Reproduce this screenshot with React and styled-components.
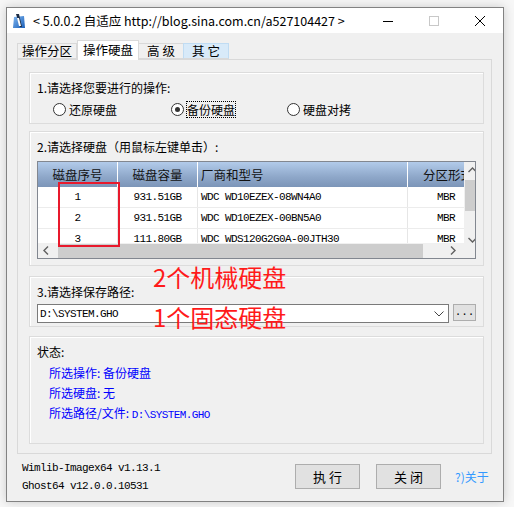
import React from 'react';
import styled, { createGlobalStyle } from 'styled-components';

const GlobalStyle = createGlobalStyle`
  body {
    margin: 0;
    background: #f7f7f7;
    font-family: "Noto Sans CJK SC", "Liberation Sans", sans-serif;
    font-size: 12px;
    color: #000;
  }
`;

const CJK = '"Noto Sans CJK SC", "Liberation Sans", sans-serif';
const MONO = '"Liberation Mono", "Noto Sans CJK SC", monospace';

const rows = [
  { no: 1, size: '931.51GB', model: 'WDC WD10EZEX-08WN4A0', part: 'MBR' },
  { no: 2, size: '931.51GB', model: 'WDC WD10EZEX-00BN5A0', part: 'MBR' },
  { no: 3, size: '111.80GB', model: 'WDC WDS120G2G0A-00JTH30', part: 'MBR' },
];

const columns = [
  { title: '磁盘序号', width: 80, align: 'center', head: 'center', key: 'no' },
  { title: '磁盘容量', width: 80, align: 'center', head: 'center', key: 'size' },
  { title: '厂商和型号', width: 210, align: 'left', head: 'left', key: 'model' },
  { title: '分区形式', width: 72, align: 'right', head: 'offset', key: 'part' },
];

const App = () => (
  <Page>
    <GlobalStyle />
    <Window>
      <TitleBar>
        <AppIcon viewBox="0 0 14 16">
          <defs>
            <linearGradient id="ic" x1="0" y1="0" x2="1" y2="1">
              <stop offset="0" stopColor="#7fb6f0" />
              <stop offset="1" stopColor="#1b5fb8" />
            </linearGradient>
          </defs>
          <path d="M2 4 L12 3 L13 15 L1 15 Z" fill="url(#ic)" />
          <path d="M4 1 L7 1 L10 14 L8 14 Z" fill="#1c2c44" />
          <path d="M5 5 L7 5 L9 13 L7 13 Z" fill="#fff" />
        </AppIcon>
        <TitleText>&lt; 5.0.0.2 自适应 http://blog.sina.com.cn/a527104427 &gt;</TitleText>
        <Controls>
          <CtrlButton>
            <svg width="10" height="10" viewBox="0 0 10 10"><path d="M0 5.5 H10" stroke="#000" strokeWidth="1" /></svg>
          </CtrlButton>
          <CtrlButton>
            <svg width="10" height="10" viewBox="0 0 10 10"><rect x="0.5" y="0.5" width="9" height="9" fill="none" stroke="#c8c8c8" strokeWidth="1" /></svg>
          </CtrlButton>
          <CtrlButton>
            <svg width="10" height="10" viewBox="0 0 10 10"><path d="M0 0 L10 10 M10 0 L0 10" stroke="#000" strokeWidth="1" /></svg>
          </CtrlButton>
        </Controls>
      </TitleBar>

      <Body>
        <TabRow>
          <Tab $w={60}>操作分区</Tab>
          <Tab $w={62} $active>操作硬盘</Tab>
          <Tab $w={46}>高 级</Tab>
          <Tab $w={46} $hover>其 它</Tab>
        </TabRow>

        <Panel>
          <Group $h={52}>
            <Label>1.请选择您要进行的操作:</Label>
            <RadioRow>
              <Radio $w={118}><RadioDot />还原硬盘</Radio>
              <Radio $w={116}><RadioDot $checked /><Focus>备份硬盘</Focus></Radio>
              <Radio><RadioDot />硬盘对拷</Radio>
            </RadioRow>
          </Group>

          <Group $h={135} $mt={7}>
            <Label>2.请选择硬盘（用鼠标左键单击）:</Label>
            <ListView>
              <ListArea>
                <HeaderRow>
                  {columns.map(c => (
                    <HeadCell key={c.key} $w={c.width} $align={c.head}>{c.title}</HeadCell>
                  ))}
                </HeaderRow>
                {rows.map(r => (
                  <DataRow key={r.no}>
                    {columns.map(c => (
                      <DataCell key={c.key} $w={c.width} $align={c.align}>{r[c.key]}</DataCell>
                    ))}
                  </DataRow>
                ))}
              </ListArea>
              <VScroll>
                <Arrow viewBox="0 0 9 6"><path d="M0.5 5 L4.5 1 L8.5 5" /></Arrow>
                <VThumb />
                <VSpacer />
                <Arrow viewBox="0 0 9 6"><path d="M0.5 1 L4.5 5 L8.5 1" /></Arrow>
              </VScroll>
              <HScroll>
                <Arrow viewBox="0 0 6 9"><path d="M5 0.5 L1 4.5 L5 8.5" /></Arrow>
                <HThumb />
                <Arrow viewBox="0 0 6 9"><path d="M1 0.5 L5 4.5 L1 8.5" /></Arrow>
              </HScroll>
              <Corner />
            </ListView>
          </Group>

          <Group $h={51} $mt={10}>
            <Label>3.请选择保存路径:</Label>
            <PathRow>
              <Combo>
                <Mono>D:\SYSTEM.GHO</Mono>
                <svg width="10" height="6" viewBox="0 0 10 6"><path d="M0.5 0.5 L5 5 L9.5 0.5" fill="none" stroke="#444" strokeWidth="1" /></svg>
              </Combo>
              <SmallButton>...</SmallButton>
            </PathRow>
          </Group>

          <Group $h={108} $mt={9}>
            <Label>状态:</Label>
            <StatusList>
              <StatusLine>所选操作: 备份硬盘</StatusLine>
              <StatusLine>所选硬盘: 无</StatusLine>
              <StatusLine>所选路径/文件: <Mono>D:\SYSTEM.GHO</Mono></StatusLine>
            </StatusList>
          </Group>

          <Highlight />
          <Note $top={203}>2个机械硬盘</Note>
          <Note $top={243}>1个固态硬盘</Note>
        </Panel>

        <Footer>
          <Versions>
            <Mono>Wimlib-Imagex64 v1.13.1</Mono>
            <Mono>Ghost64 v12.0.0.10531</Mono>
          </Versions>
          <Button>执 行</Button>
          <Button>关 闭</Button>
          <About>?)关于</About>
        </Footer>
      </Body>
    </Window>
  </Page>
);

const Page = styled.div`
  padding: 7px 10px 5px 6px;
`;

const Window = styled.div`
  box-sizing: border-box;
  width: 498px;
  height: 495px;
  border: 1px solid #828282;
  box-shadow: 0 0 10px rgba(0, 0, 0, 0.18);
  display: flex;
  flex-direction: column;
  background: #f0f0f0;
`;

const TitleBar = styled.div`
  height: 25px;
  background: #fff;
  display: flex;
  align-items: center;
`;

const AppIcon = styled.svg`
  width: 14px;
  height: 16px;
  margin-left: 5px;
  flex: none;
`;

const TitleText = styled.div`
  margin-left: 7px;
  font-family: ${CJK};
  font-size: 12.5px;
  white-space: nowrap;
  flex: 1;
`;

const Controls = styled.div`
  display: flex;
  height: 100%;
`;

const CtrlButton = styled.div`
  width: 46px;
  height: 100%;
  display: flex;
  align-items: center;
  justify-content: center;
`;

const Body = styled.div`
  flex: 1;
  display: flex;
  flex-direction: column;
  padding: 7px 11px 0 10px;
`;

const TabRow = styled.div`
  display: flex;
  align-items: flex-end;
  height: 19px;
  padding-left: 1px;
`;

const Tab = styled.div`
  box-sizing: border-box;
  width: ${p => p.$w}px;
  height: ${p => (p.$active ? 20 : 16)}px;
  margin-bottom: ${p => (p.$active ? -1 : 0)}px;
  position: relative;
  z-index: ${p => (p.$active ? 2 : 0)};
  background: ${p => (p.$active ? '#fff' : p.$hover ? '#d8eaf9' : '#f0f0f0')};
  border: 1px solid ${p => (p.$hover ? '#c0dcf3' : '#d9d9d9')};
  border-bottom: ${p => (p.$active ? 'none' : '1px solid #d9d9d9')};
  margin-left: ${p => (p.$active ? 0 : -1)}px;
  font-size: 12.5px;
  line-height: ${p => (p.$active ? 17 : 14)}px;
  text-align: center;
  white-space: nowrap;
`;

const Panel = styled.div`
  position: relative;
  box-sizing: border-box;
  width: 475px;
  height: 395px;
  border: 1px solid #d9d9d9;
  padding: 12px 7px 0 11px;
  display: flex;
  flex-direction: column;
`;

const Group = styled.div`
  box-sizing: border-box;
  height: ${p => p.$h}px;
  margin-top: ${p => p.$mt || 0}px;
  border: 1px solid #dcdcdc;
  box-shadow: inset 1px 1px 0 #fff;
  padding: 6px 7px 0 7px;
  display: flex;
  flex-direction: column;
`;

const Label = styled.div`
  font-size: 12px;
  line-height: 17px;
  white-space: nowrap;
`;

const RadioRow = styled.div`
  display: flex;
  align-items: center;
  margin-top: 5px;
  padding-left: 16px;
`;

const Radio = styled.div`
  display: flex;
  align-items: center;
  width: ${p => (p.$w ? `${p.$w}px` : 'auto')};
  font-size: 12px;
  line-height: 17px;
`;

const RadioDot = styled.span`
  box-sizing: border-box;
  width: 13px;
  height: 13px;
  border-radius: 50%;
  border: 1px solid #333;
  background: #fff;
  margin-right: ${p => (p.$checked ? 2 : 3)}px;
  display: flex;
  align-items: center;
  justify-content: center;
  &::after {
    content: '';
    display: ${p => (p.$checked ? 'block' : 'none')};
    width: 5px;
    height: 5px;
    border-radius: 50%;
    background: #333;
  }
`;

const Focus = styled.span`
  outline: 1px dotted #000;
  outline-offset: -1px;
  padding: 0 1px;
`;

const ListView = styled.div`
  margin-top: 6px;
  box-sizing: border-box;
  width: 439px;
  height: 98px;
  border: 1px solid #828790;
  background: #fff;
  display: grid;
  grid-template-columns: 1fr 16px;
  grid-template-rows: 1fr 15px;
  overflow: hidden;
`;

const ListArea = styled.div`
  overflow: hidden;
`;

const HeaderRow = styled.div`
  display: flex;
  height: 25px;
  background: linear-gradient(#b2cbea, #8ea7c9 60%, #7c95b8);
`;

const HeadCell = styled.div`
  flex: none;
  box-sizing: border-box;
  width: ${p => p.$w}px;
  border-right: 1px solid #fff;
  font-size: 12.5px;
  line-height: 25px;
  text-align: ${p => (p.$align === 'center' ? 'center' : 'left')};
  padding-left: ${p => (p.$align === 'left' ? 3 : p.$align === 'offset' ? 15 : 0)}px;
  color: #111;
  white-space: nowrap;
`;

const DataRow = styled.div`
  display: flex;
  height: 21px;
  border-bottom: 1px solid #ececec;
  box-sizing: border-box;
`;

const DataCell = styled.div`
  flex: none;
  box-sizing: border-box;
  width: ${p => p.$w}px;
  border-right: 1px solid #e6e6e6;
  font-family: ${MONO};
  font-size: 11px;
  letter-spacing: -0.6px;
  line-height: 20px;
  text-align: ${p => p.$align};
  padding: ${p => (p.$align === 'left' ? '0 0 0 3px' : p.$align === 'right' ? '0 24px 0 0' : '0')};
  white-space: nowrap;
  overflow: hidden;
`;

const VScroll = styled.div`
  background: #f0f0f0;
  display: flex;
  flex-direction: column;
  align-items: center;
  padding-top: 5px;
`;

const Arrow = styled.svg`
  width: ${p => (p.viewBox === '0 0 9 6' ? 9 : 6)}px;
  height: ${p => (p.viewBox === '0 0 9 6' ? 6 : 9)}px;
  flex: none;
  path {
    fill: none;
    stroke: #606060;
    stroke-width: 1.4;
  }
`;

const VThumb = styled.div`
  width: 15px;
  height: 31px;
  margin-top: 7px;
  background: #cdcdcd;
`;

const VSpacer = styled.div`
  flex: 1;
`;

const HScroll = styled.div`
  background: #f0f0f0;
  display: flex;
  align-items: center;
  padding: 0 8px 0 5px;
`;

const HThumb = styled.div`
  height: 14px;
  width: 365px;
  margin: 0 27px 0 9px;
  background: #cdcdcd;
`;

const Corner = styled.div`
  background: #f0f0f0;
`;

const PathRow = styled.div`
  display: flex;
  gap: 4px;
  margin-top: 4px;
`;

const Combo = styled.div`
  box-sizing: border-box;
  width: 414px;
  height: 19px;
  border: 1px solid #7a7a7a;
  background: #fff;
  display: flex;
  align-items: center;
  justify-content: space-between;
  padding: 0 4px 0 2px;
`;

const SmallButton = styled.div`
  box-sizing: border-box;
  width: 23px;
  height: 17px;
  border: 1px solid #adadad;
  background: #e1e1e1;
  font-family: ${MONO};
  font-size: 11px;
  line-height: 14px;
  text-align: center;
  letter-spacing: 0;
`;

const Mono = styled.span`
  font-family: ${MONO};
  font-size: 11px;
  letter-spacing: -0.6px;
  white-space: nowrap;
`;

const StatusList = styled.div`
  display: flex;
  flex-direction: column;
  padding-left: 12px;
  margin-top: 3px;
`;

const StatusLine = styled.div`
  color: #0000ff;
  font-size: 12px;
  line-height: 20px;
  white-space: nowrap;
`;

const Highlight = styled.div`
  position: absolute;
  left: 40px;
  top: 122px;
  width: 62px;
  height: 65px;
  box-sizing: border-box;
  border: 2px solid #e8192c;
  pointer-events: none;
`;

const Note = styled.div`
  position: absolute;
  left: 135px;
  top: ${p => p.$top}px;
  color: #ff1a1a;
  font-family: ${CJK};
  font-size: 24px;
  line-height: 28px;
  white-space: nowrap;
  pointer-events: none;
`;

const Footer = styled.div`
  flex: 1;
  display: flex;
  align-items: center;
  padding: 0 0 2px 5px;
`;

const Versions = styled.div`
  display: flex;
  flex-direction: column;
  gap: 4px;
  width: 273px;
  line-height: 14px;
`;

const Button = styled.div`
  box-sizing: border-box;
  width: 65px;
  height: 25px;
  margin-right: 16px;
  border: 1px solid #adadad;
  background: #e1e1e1;
  font-size: 13px;
  line-height: 23px;
  text-align: center;
  white-space: pre;
`;

const About = styled.div`
  margin-left: -2px;
  color: #3399ff;
  font-size: 12px;
  white-space: nowrap;
`;

export default App;
